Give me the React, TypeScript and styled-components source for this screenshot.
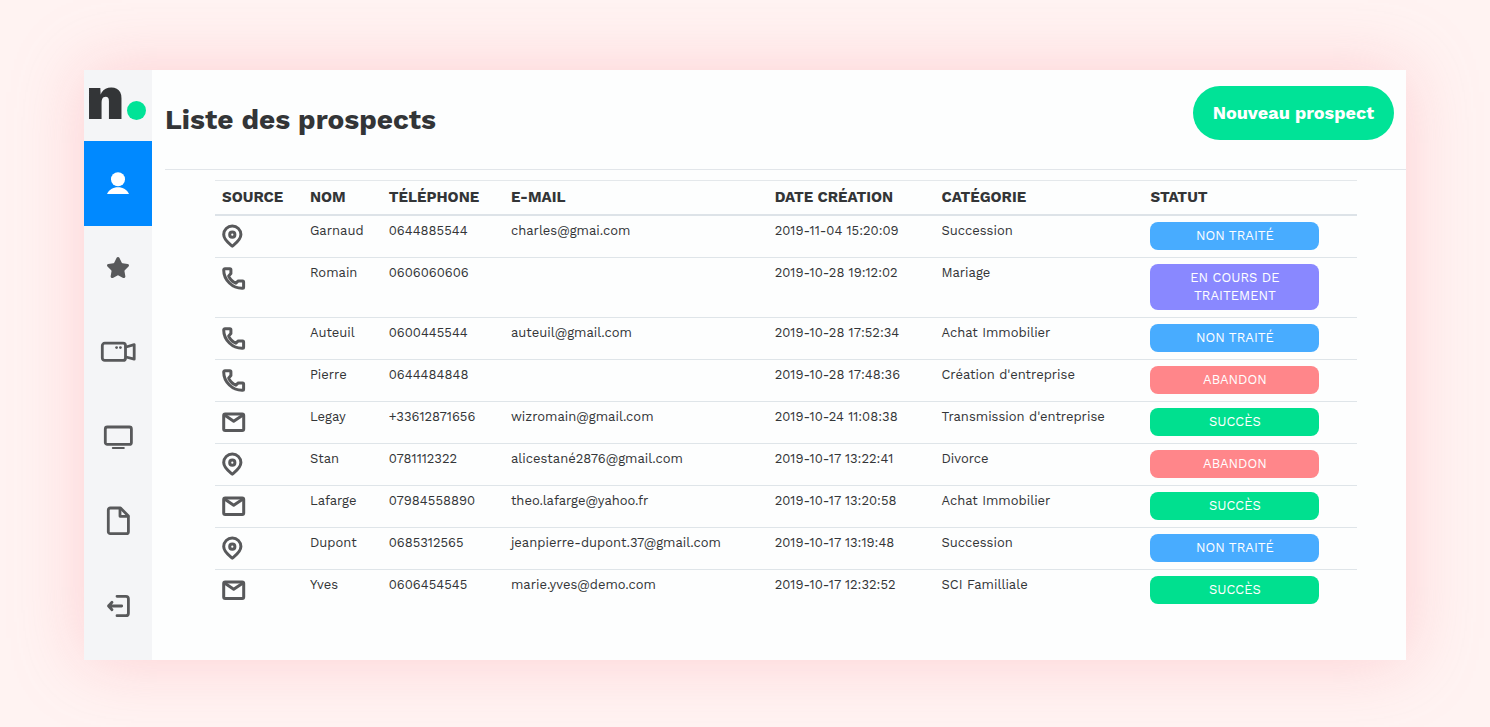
import React from "react";
import styled, { createGlobalStyle } from "styled-components";
import { Star } from "lucide-react";

const GlobalStyle = createGlobalStyle`
  *, *::before, *::after { box-sizing: border-box; }
  body {
    margin: 0;
    background: #fff3f2;
    color: #333537;
    font-family: "Work Sans", Inter, "Liberation Sans", sans-serif;
  }
`;

const Page = styled.div`
  min-height: 100vh;
  display: flex;
  padding: 70px 84px 67px;
`;

const Frame = styled.div`
  flex: 1;
  min-width: 0;
  display: flex;
  background: #fdfefe;
  box-shadow: 0 0 64px rgba(250, 150, 160, 0.38);
`;

const Sidebar = styled.aside`
  width: 68px;
  flex: none;
  display: flex;
  flex-direction: column;
  padding-bottom: 12px;
  background: #f4f5f7;
`;

const Logo = styled.a`
  height: 71px;
  display: flex;
  align-items: flex-end;
  gap: 3px;
  padding: 0 2px 21px;
  color: #333537;
  font-size: 62px;
  font-weight: 800;
  line-height: 44px;
  text-decoration: none;
`;

const LogoDot = styled.span`
  width: 19px;
  height: 19px;
  flex: none;
  border-radius: 50%;
  background: #00e397;
`;

const Nav = styled.nav`
  flex: 1;
  display: flex;
  flex-direction: column;
`;

const NavItem = styled.a<{ $active?: boolean }>`
  flex: 1;
  display: flex;
  align-items: center;
  justify-content: center;
  background: ${(p) => (p.$active ? "#0089ff" : "transparent")};
  color: ${(p) => (p.$active ? "#fff" : "#58595b")};
`;

const Main = styled.main`
  flex: 1;
  min-width: 0;
  padding-left: 13px;
`;

const Header = styled.header`
  height: 100px;
  display: flex;
  justify-content: space-between;
  align-items: center;
  padding-right: 12px;
  border-bottom: 1px solid #e2e6ea;
`;

const Title = styled.h1`
  margin: 0;
  font-size: 28px;
  line-height: 36px;
  font-weight: 700;
`;

const NewButton = styled.button`
  height: 54px;
  margin-bottom: 14px;
  padding: 0 20px;
  border: 0;
  border-radius: 27px;
  background: #00e397;
  color: #fff;
  font: inherit;
  font-size: 18px;
  font-weight: 700;
`;

const TableArea = styled.div`
  padding: 10px 49px 49px 50px;
`;

const Table = styled.table`
  width: 100%;
  table-layout: fixed;
  border-collapse: separate;
  border-spacing: 0;
  font-size: 13px;
  line-height: 18px;
`;

const Col = styled.col<{ $share: number }>`
  width: ${(p) => p.$share}%;
`;

const Th = styled.th`
  height: 36px;
  padding: 0 7px 2px;
  border-top: 1px solid #e4e8eb;
  border-bottom: 2px solid #dde3e8;
  font-size: 15px;
  font-weight: 700;
  text-align: left;
  white-space: nowrap;
`;

const Row = styled.tr`
  & + & > td { border-top: 1px solid #dfe5e9; }
`;

const Td = styled.td`
  padding: 6px 7px 7px;
  vertical-align: top;
  white-space: nowrap;
`;

const SourceIcon = styled.svg`
  display: block;
  width: 24px;
  height: 24px;
  margin-top: 2px;
  color: #58595b;
`;

const statusColors = {
  "Non traité": "#48acff",
  "En cours de traitement": "#8988ff",
  Abandon: "#ff868a",
  Succès: "#00e08f",
};
type Status = keyof typeof statusColors;

const Badge = styled.div<{ $status: Status }>`
  max-width: 169px;
  padding: 5px 32px;
  border-radius: 8px;
  background: ${(p) => statusColors[p.$status]};
  color: #fff;
  text-align: center;
  text-transform: uppercase;
  white-space: normal;
`;

type Source = "pin" | "phone" | "mail";

const sourceLabels: Record<Source, string> = { pin: "Agence", phone: "Appel", mail: "Courriel" };

const sourceShapes: Record<Source, React.ReactNode> = {
  pin: (
    <>
      <path d="M10.3 22.2C7.5 19.9 1.7 16 1.7 10.6a8.6 8.6 0 0 1 17.2 0c0 5.4-5.800 9.3-8.6 11.6z" />
      <circle cx="10.3" cy="10.7" r="2.6" />
    </>
  ),
  phone: (
    <path d="M3 2.7H7.9a1 1 0 0 1 1 1V7.6L6.7 10.1C8 13 10.8 15.900 13.900 17.200L16.300 14.900H20.600a1 1 0 0 1 1 1V21.300a1 1 0 0 1-1 1C10.500 22.600 1.700 14 1.700 4a1.300 1.300 0 0 1 1.300-1.300z" />
  ),
  mail: (
    <>
      <rect x="1.7" y="4.1" width="20" height="16.5" rx="1.5" />
      <path d="M2.500 4.900L11.700 11.200L21 4.900" />
    </>
  ),
};

function SourceMark({ source }: { source: Source }) {
  return (
    <SourceIcon
      viewBox="0 0 24 24"
      fill="none"
      stroke="currentColor"
      strokeWidth="3"
      strokeLinejoin="round"
      role="img"
      aria-label={sourceLabels[source]}
    >
      {sourceShapes[source]}
    </SourceIcon>
  );
}

const stroke = {
  fill: "none",
  stroke: "currentColor",
  strokeWidth: 2.8,
  strokeLinecap: "round",
  strokeLinejoin: "round",
} as const;

const navItems = [
  {
    label: "Prospects",
    icon: (
      <svg width="24" height="24" viewBox="0 0 24 24" fill="currentColor">
        <circle cx="12" cy="8.3" r="7" />
        <path d="M1 23C3 18.500 7 16.200 12 16.200S21 18.500 23 23z" />
      </svg>
    ),
  },
  { label: "Favoris", icon: <Star size={24} fill="currentColor" /> },
  {
    label: "Visio",
    icon: (
      <svg width="36" height="24" viewBox="0 0 36 24" {...stroke}>
        <rect x="2.3" y="3.2" width="23.2" height="17.2" rx="2.5" />
        <path d="M26 7L34.200 4.700V19.200L26 17" />
        <g fill="currentColor" stroke="none">
          <circle cx="16.6" cy="7.6" r="1.4" />
          <circle cx="20.4" cy="7.6" r="1.4" />
        </g>
      </svg>
    ),
  },
  {
    label: "Écran",
    icon: (
      <svg width="30" height="24" viewBox="0 0 30 24" {...stroke}>
        <rect x="2.3" y="2" width="26.1" height="17.4" rx="2" />
        <path d="M9.800 23H20.800" strokeWidth="2" />
      </svg>
    ),
  },
  {
    label: "Documents",
    icon: (
      <svg width="24" height="30" viewBox="0 0 24 30" {...stroke}>
        <path d="M4.300 2H14.500L22.400 10V25.700a2 2 0 0 1-2 2H4.300a2 2 0 0 1-2-2V4a2 2 0 0 1 2-2z" />
        <path d="M14 2.500V10.300H22" />
      </svg>
    ),
  },
  {
    label: "Déconnexion",
    icon: (
      <svg width="24" height="24" viewBox="0 0 24 24" {...stroke}>
        <path d="M11 2.300H19.900a2.500 2.500 0 0 1 2.500 2.500V19.200a2.500 2.500 0 0 1-2.500 2.500H11" />
        <path d="M15.700 12H2.500M6 8.200L2.500 12L6 15.800" />
      </svg>
    ),
  },
];

interface Prospect {
  source: Source;
  name: string;
  phone: string;
  email: string;
  date: string;
  category: string;
  status: Status;
}

const prospects: Prospect[] = [
  { source: "pin", name: "Garnaud", phone: "0644885544", email: "charles@gmai.com", date: "2019-11-04 15:20:09", category: "Succession", status: "Non traité" },
  { source: "phone", name: "Romain", phone: "0606060606", email: "", date: "2019-10-28 19:12:02", category: "Mariage", status: "En cours de traitement" },
  { source: "phone", name: "Auteuil", phone: "0600445544", email: "auteuil@gmail.com", date: "2019-10-28 17:52:34", category: "Achat Immobilier", status: "Non traité" },
  { source: "phone", name: "Pierre", phone: "0644484848", email: "", date: "2019-10-28 17:48:36", category: "Création d'entreprise", status: "Abandon" },
  { source: "mail", name: "Legay", phone: "+33612871656", email: "wizromain@gmail.com", date: "2019-10-24 11:08:38", category: "Transmission d'entreprise", status: "Succès" },
  { source: "pin", name: "Stan", phone: "0781112322", email: "alicestané2876@gmail.com", date: "2019-10-17 13:22:41", category: "Divorce", status: "Abandon" },
  { source: "mail", name: "Lafarge", phone: "07984558890", email: "theo.lafarge@yahoo.fr", date: "2019-10-17 13:20:58", category: "Achat Immobilier", status: "Succès" },
  { source: "pin", name: "Dupont", phone: "0685312565", email: "jeanpierre-dupont.37@gmail.com", date: "2019-10-17 13:19:48", category: "Succession", status: "Non traité" },
  { source: "mail", name: "Yves", phone: "0606454545", email: "marie.yves@demo.com", date: "2019-10-17 12:32:52", category: "SCI Familliale", status: "Succès" },
];

const columns = [
  { title: "SOURCE", share: 7.7 },
  { title: "NOM", share: 6.9 },
  { title: "TÉLÉPHONE", share: 10.7 },
  { title: "E-MAIL", share: 23.1 },
  { title: "DATE CRÉATION", share: 14.6 },
  { title: "CATÉGORIE", share: 18.3 },
  { title: "STATUT", share: 18.7 },
];

export default function App() {
  return (
    <Page>
      <GlobalStyle />
      <Frame>
        <Sidebar>
          <Logo href="#">
            n<LogoDot />
          </Logo>
          <Nav>
            {navItems.map((item, i) => (
              <NavItem key={item.label} href="#" aria-label={item.label} $active={i === 0}>
                {item.icon}
              </NavItem>
            ))}
          </Nav>
        </Sidebar>
        <Main>
          <Header>
            <Title>Liste des prospects</Title>
            <NewButton type="button">Nouveau prospect</NewButton>
          </Header>
          <TableArea>
            <Table>
              <colgroup>
                {columns.map((c) => (
                  <Col key={c.title} $share={c.share} />
                ))}
              </colgroup>
              <thead>
                <tr>
                  {columns.map((c) => (
                    <Th key={c.title} scope="col">{c.title}</Th>
                  ))}
                </tr>
              </thead>
              <tbody>
                {prospects.map((p) => (
                  <Row key={p.date}>
                    <Td><SourceMark source={p.source} /></Td>
                    <Td>{p.name}</Td>
                    <Td>{p.phone}</Td>
                    <Td>{p.email}</Td>
                    <Td>{p.date}</Td>
                    <Td>{p.category}</Td>
                    <Td><Badge $status={p.status}>{p.status}</Badge></Td>
                  </Row>
                ))}
              </tbody>
            </Table>
          </TableArea>
        </Main>
      </Frame>
    </Page>
  );
}
